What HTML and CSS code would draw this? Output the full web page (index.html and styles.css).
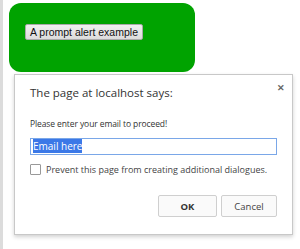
FILE: index.html
```html
<!DOCTYPE html>
<html lang="en">
<head>
    <meta charset="UTF-8">
    <meta name="viewport" content="width=device-width, initial-scale=1.0">
    <title>Prompt alert</title>
    <link rel="stylesheet" href="styles.css">
</head>
<body>
    <div class="page">
        <div class="green-box">
            <button type="button" class="demo-btn">A prompt alert example</button>
        </div>

        <div class="dialog">
            <div class="dialog-head">
                <span class="dialog-title">The page at localhost says:</span>
                <span class="dialog-close">&#x2715;</span>
            </div>
            <div class="dialog-msg">Please enter your email to proceed!</div>
            <div class="dialog-input"><span class="sel">Email here</span></div>
            <label class="dialog-check">
                <span class="box"></span>
                Prevent this page from creating additional dialogues.
            </label>
            <div class="dialog-actions">
                <span class="dbtn ok">OK</span>
                <span class="dbtn">Cancel</span>
            </div>
        </div>
    </div>
</body>
</html>
```

FILE: styles.css
```css
html, body {
    margin: 0;
    padding: 0;
    background: #fff;
}
body {
    font-family: "Open Sans", "Noto Sans", sans-serif;
    color: #333;
}
.page {
    border-left: 3px solid #dcdcdc;
    height: 249px;
    padding-top: 3px;
    box-sizing: border-box;
}
.green-box {
    margin-left: 6px;
    width: 186px;
    height: 69px;
    background: #00a300;
    border-radius: 12px;
    padding: 21px 0 0 16px;
    box-sizing: border-box;
}
.demo-btn {
    display: block;
    font-family: "Liberation Sans", Arial, sans-serif;
    font-size: 10.5px;
    color: #111;
    background: linear-gradient(#f0f0f0, #dcdcdc);
    border: 1px solid #a9a9a9;
    border-radius: 2px;
    padding: 1px 4px;
    height: 16px;
    line-height: 12px;
    white-space: nowrap;
}
.dialog {
    margin: 2px 0 0 11px;
    width: 279px;
    height: 161px;
    box-sizing: border-box;
    border: 1px solid #c8c8c8;
    background: #fff;
    box-shadow: 0 2px 4px rgba(0,0,0,0.18);
    padding: 8px 13px 0 15px;
}
.dialog-head {
    display: flex;
    justify-content: space-between;
    align-items: flex-start;
}
.dialog-title {
    font-size: 11.5px;
    color: #333;
    margin-top: 2px;
}
.dialog-close {
    font-size: 9px;
    color: #666;
    font-weight: bold;
    margin: -2px -6px 0 0;
}
.dialog-msg {
    font-size: 8.5px;
    letter-spacing: -0.1px;
    color: #333;
    margin-top: 18px;
}
.dialog-input {
    margin-top: 9px;
    width: 247px;
    height: 17px;
    box-sizing: border-box;
    border: 1px solid #7aa7e8;
    padding: 1px 2px;
    font-size: 10px;
    line-height: 13px;
}
.dialog-input .sel {
    background: #3b78e7;
    color: #fff;
}
.dialog-check {
    display: flex;
    align-items: center;
    gap: 5px;
    font-size: 9px;
    color: #444;
    margin-top: 8px;
}
.dialog-check .box {
    width: 9px;
    height: 9px;
    border: 1px solid #999;
    border-radius: 1px;
    background: #fff;
}
.dialog-actions {
    display: flex;
    justify-content: flex-end;
    gap: 4px;
    margin-top: 19px;
    padding-right: 2px;
}
.dbtn {
    width: 56px;
    height: 22px;
    box-sizing: border-box;
    border: 1px solid #cfcfcf;
    border-radius: 2px;
    background: #fafafa;
    font-size: 9.5px;
    color: #444;
    display: flex;
    align-items: center;
    justify-content: center;
}
.dbtn.ok {
    width: 59px;
    font-weight: bold;
    color: #333;
}
```
